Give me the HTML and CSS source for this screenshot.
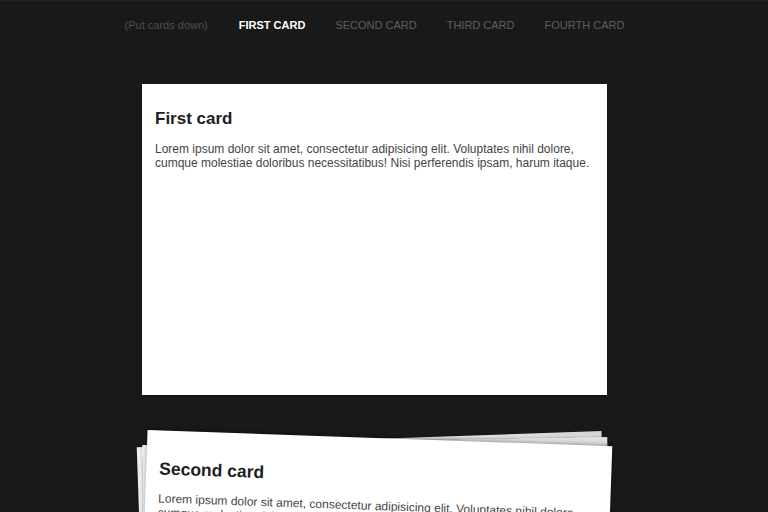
FILE: index.html
```html
<!DOCTYPE html>
<html>
<head>
<meta charset="utf-8">
<link rel="stylesheet" href="styles.css">
</head>
<body>
<div class="page">
  <nav class="nav">
    <a class="nav-item nav-down">(Put cards down)</a>
    <a class="nav-item active">FIRST CARD</a>
    <a class="nav-item">SECOND CARD</a>
    <a class="nav-item">THIRD CARD</a>
    <a class="nav-item">FOURTH CARD</a>
  </nav>
  <main class="deck">
    <section class="card card-up">
      <h2 class="card-title">First card</h2>
      <p class="card-text">Lorem ipsum dolor sit amet, consectetur adipisicing elit. Voluptates nihil dolore, cumque molestiae doloribus necessitatibus! Nisi perferendis ipsam, harum itaque.</p>
    </section>
    <div class="pile">
      <section class="card pile-card pile-back">
        <h2 class="card-title">Fourth card</h2>
        <p class="card-text">Lorem ipsum dolor sit amet, consectetur adipisicing elit. Voluptates nihil dolore, cumque molestiae doloribus necessitatibus! Nisi perferendis ipsam, harum itaque.</p>
      </section>
      <section class="card pile-card pile-mid">
        <h2 class="card-title">Third card</h2>
        <p class="card-text">Lorem ipsum dolor sit amet, consectetur adipisicing elit. Voluptates nihil dolore, cumque molestiae doloribus necessitatibus! Nisi perferendis ipsam, harum itaque.</p>
      </section>
      <section class="card pile-card pile-front">
        <h2 class="card-title">Second card</h2>
        <p class="card-text">Lorem ipsum dolor sit amet, consectetur adipisicing elit. Voluptates nihil dolore, cumque molestiae doloribus necessitatibus! Nisi perferendis ipsam, harum itaque.</p>
      </section>
    </div>
  </main>
</div>
</body>
</html>
```
FILE: styles.css
```css
html, body {
  margin: 0;
  padding: 0;
  background: #191919;
  overflow: hidden;
}
body {
  font-family: "Liberation Sans", Arial, sans-serif;
  border-top: 1px solid #222;
}
.page {
  width: 749px;
}
.nav {
  display: flex;
  justify-content: center;
  padding-top: 18px;
  font-size: 11px;
  line-height: 13px;
}
.nav-item {
  margin: 0 15px;
  color: #5f5f5f;
  text-decoration: none;
}
.nav-down {
  color: #4e4e4e;
  margin-right: 16px;
}
.nav-item.active {
  color: #ffffff;
  font-weight: bold;
}
.deck {
  display: flex;
  flex-direction: column;
  align-items: center;
  padding-top: 52px;
}
.card {
  box-sizing: border-box;
  width: 465px;
  height: 311px;
  padding: 13px;
  background: #fff;
}
.card-up {
  box-shadow: 0 1px 2px rgba(0,0,0,0.5);
}
.card-title {
  margin: 12px 0 0;
  font-size: 17px;
  line-height: 20px;
  font-weight: bold;
  color: #1e1e1e;
}
.card-text {
  margin: 13px 0 0;
  font-size: 12px;
  line-height: 14px;
  color: #444;
}
.pile {
  position: relative;
  width: 465px;
  height: 311px;
  margin-top: 43px;
}
.pile-card {
  position: absolute;
  left: 0;
  top: 0;
}
.pile-back {
  transform: translateY(1px) rotate(-2deg);
  background: linear-gradient(90deg, #ececec, #e2e2e2 60%, #d6d6d6);
  box-shadow: 0 0 2px rgba(0,0,0,0.4);
}
.pile-mid {
  transform: translate(3px, 3px) rotate(-1deg);
  background: linear-gradient(90deg, #f0f0f0, #e6e6e6 60%, #dedede);
  box-shadow: 0 0 2px rgba(0,0,0,0.4);
}
.pile-back .card-title, .pile-back .card-text,
.pile-mid .card-title, .pile-mid .card-text {
  visibility: hidden;
}
.pile-front {
  transform: rotate(2deg);
  padding-top: 16px;
  box-shadow: 0 -1px 4px rgba(0,0,0,0.35);
}
.pile-front .card-title {
  font-size: 17.5px;
}
```
